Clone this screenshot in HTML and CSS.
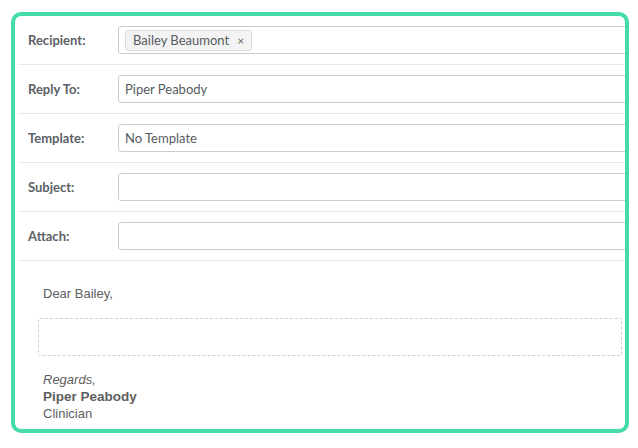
FILE: index.html
```html
<!DOCTYPE html>
<html>
<head>
<meta charset="utf-8">
<link rel="stylesheet" href="styles.css">
</head>
<body>
<div class="card">
  <div class="form">
    <div class="row">
      <div class="label">Recipient:</div>
      <div class="field">
        <span class="chip">Bailey Beaumont<span class="x">×</span></span>
      </div>
    </div>
    <div class="row">
      <div class="label">Reply To:</div>
      <div class="field">Piper Peabody</div>
    </div>
    <div class="row">
      <div class="label">Template:</div>
      <div class="field">No Template</div>
    </div>
    <div class="row">
      <div class="label">Subject:</div>
      <div class="field"></div>
    </div>
    <div class="row">
      <div class="label">Attach:</div>
      <div class="field"></div>
    </div>
  </div>
  <div class="letter">
    <p class="greeting">Dear Bailey,</p>
    <div class="editor"></div>
    <div class="sign">
      <div class="regards">Regards,</div>
      <div class="name">Piper Peabody</div>
      <div class="role">Clinician</div>
    </div>
  </div>
</div>
</body>
</html>
```
FILE: styles.css
```css
html, body {
  margin: 0;
  padding: 0;
  background: #fff;
}
body {
  padding: 12px 9px 0 11px;
}
.card {
  width: 610px;
  height: 413px;
  border: 4px solid #44dcaa;
  border-radius: 10px;
  overflow: hidden;
  background: #fff;
}
.form {
  padding: 0 1px 0 3px;
}
.row {
  display: flex;
  align-items: center;
  height: 48px;
  border-bottom: 1px solid #e8e8e8;
}
.label {
  width: 90px;
  padding-left: 10px;
  font-family: Lato, sans-serif;
  font-weight: bold;
  font-size: 13px;
  color: #5b6166;
}
.field {
  flex: 1;
  margin-right: -30px;
  height: 26px;
  border: 1px solid #cccccc;
  border-radius: 3px;
  display: flex;
  align-items: center;
  padding-left: 6px;
  font-family: Lato, sans-serif;
  font-size: 13px;
  color: #555b60;
}
.chip {
  display: inline-flex;
  align-items: center;
  height: 19px;
  padding: 0 7px;
  background: #f3f3f3;
  border: 1px solid #dcdcdc;
  border-radius: 3px;
  font-family: Lato, sans-serif;
  font-size: 13px;
  color: #555b60;
}
.chip .x {
  margin-left: 8px;
  font-size: 12px;
  color: #666;
}
.letter {
  padding: 25px 3px 0 23px;
  font-family: "Liberation Sans", Arial, sans-serif;
  font-size: 13px;
  color: #5e5e5e;
}
.greeting {
  margin: 0 0 16px 5px;
  line-height: 16px;
}
.editor {
  height: 36px;
  border: 1px dashed #cfcfcf;
  border-radius: 2px;
}
.sign {
  margin: 15px 0 0 5px;
  line-height: 17px;
}
.regards {
  font-style: italic;
}
.name {
  font-weight: bold;
  font-size: 13.5px;
}
```
